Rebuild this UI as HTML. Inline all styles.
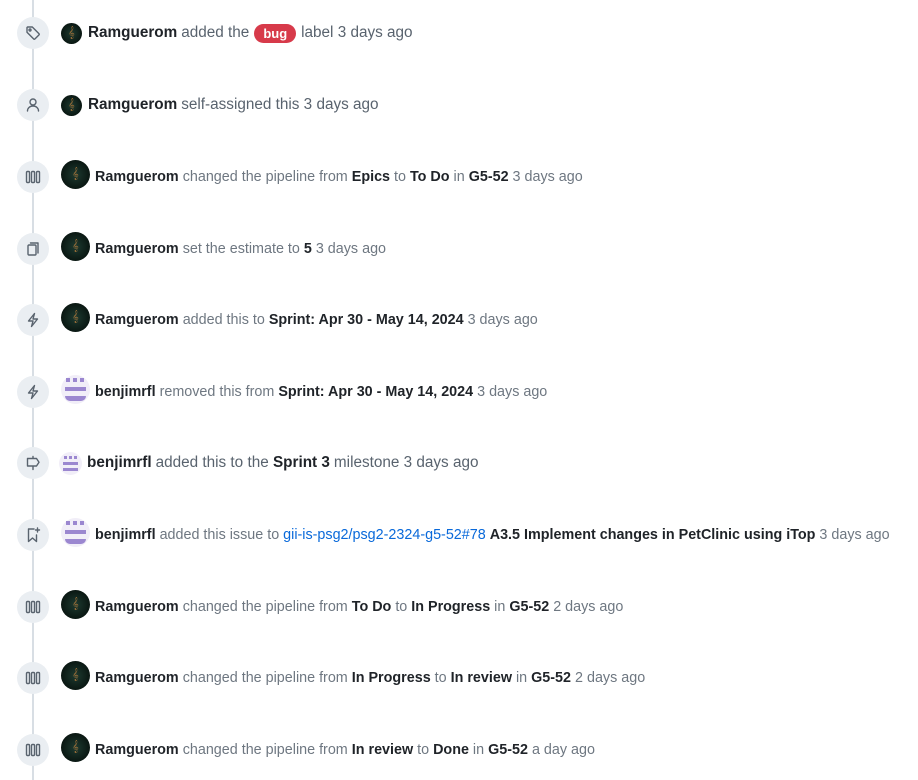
<!DOCTYPE html>
<html><head><meta charset="utf-8"><style>
body{margin:0;width:918px;height:780px;background:#fff;position:relative;overflow:hidden;font-family:"Liberation Sans",sans-serif;}
.line{position:absolute;left:32px;top:0;width:2px;height:780px;background:#d8dee4;}
.ic{position:absolute;left:17px;width:32px;height:32px;border-radius:50%;background:#eaeef2;display:flex;align-items:center;justify-content:center;}
.ic svg{width:16px;height:16px;fill:none;stroke:#59636e;stroke-width:1.4;stroke-linecap:round;stroke-linejoin:round}
.t{position:absolute;white-space:nowrap;display:flex;align-items:center;}
.g{font-size:15.3px;color:#59636e;}
.z{font-size:14.35px;color:#6e7781;}
.z .tx{position:relative;top:3px}
b{color:#1f2328;font-weight:bold;}
.g b{margin-right:4px}
.av{border-radius:50%;background:radial-gradient(circle,#1d3a30 0%,#07120e 80%);display:inline-flex;align-items:center;justify-content:center;color:#a8743a;font-size:11px;margin-right:6px;flex:none}
.bv{border-radius:50%;background:#f1eef8;position:relative;display:inline-block;margin-right:6px;flex:none}
.bv i{position:absolute;background:#9b87d0;}
.lab{background:#d73a4a;color:#fff;font-weight:bold;font-size:13px;border-radius:11px;padding:2px 9px;margin:0 5px;}
a{color:#0969da;text-decoration:none}
</style></head><body>
<div class="line"></div>

<div class="ic" style="top:17px"><svg viewBox="0 0 16 16"><path d="M2 2.5v4.8l6.6 6.6a1 1 0 0 0 1.4 0l3.9-3.9a1 1 0 0 0 0-1.4L7.3 2H2.5z"/><circle cx="5" cy="5" r="1"/></svg></div>
<div class="t g" style="left:61px;top:22px;height:22px"><span class="av" style="width:21px;height:21px">𝄞</span><b>Ramguerom</b>added the<span class="lab">bug</span>label 3 days ago</div>

<div class="ic" style="top:89px"><svg viewBox="0 0 16 16"><circle cx="8" cy="5" r="3"/><path d="M2.5 14c0-3 2.5-5 5.5-5s5.5 2 5.5 5"/></svg></div>
<div class="t g" style="left:61px;top:94px;height:22px"><span class="av" style="width:21px;height:21px">𝄞</span><b>Ramguerom</b>self-assigned this 3 days ago</div>

<div class="ic" style="top:161px"><svg viewBox="0 0 16 16"><rect x="1.5" y="2.5" width="3" height="11" rx="1"/><rect x="6.5" y="2.5" width="3" height="11" rx="1"/><rect x="11.5" y="2.5" width="3" height="11" rx="1"/></svg></div>
<div class="t z" style="left:61px;top:159px;height:30px"><span class="av" style="width:29px;height:29px;margin-right:5px">𝄞</span><span class="tx"><b>Ramguerom</b> changed the pipeline from <b>Epics</b> to <b>To Do</b> in <b>G5-52</b> 3 days ago</span></div>

<div class="ic" style="top:233px"><svg viewBox="0 0 16 16"><rect x="3" y="4" width="8" height="10" rx="1"/><path d="M5.5 2h7.5v10"/></svg></div>
<div class="t z" style="left:61px;top:231px;height:30px"><span class="av" style="width:29px;height:29px;margin-right:5px">𝄞</span><span class="tx"><b>Ramguerom</b> set the estimate to <b>5</b> 3 days ago</span></div>

<div class="ic" style="top:304px"><svg viewBox="0 0 16 16"><path d="M9.5 1.5L3.5 9h4.5l-1.5 5.5 6-7.5H8z"/></svg></div>
<div class="t z" style="left:61px;top:302px;height:30px"><span class="av" style="width:29px;height:29px;margin-right:5px">𝄞</span><span class="tx"><b>Ramguerom</b> added this to <b>Sprint: Apr 30 - May 14, 2024</b> 3 days ago</span></div>

<div class="ic" style="top:376px"><svg viewBox="0 0 16 16"><path d="M9.5 1.5L3.5 9h4.5l-1.5 5.5 6-7.5H8z"/></svg></div>
<div class="t z" style="left:61px;top:374px;height:30px"><span class="bv" style="width:29px;height:29px;margin-right:5px"><i style="left:5px;top:3px;width:4px;height:4px"></i><i style="left:12px;top:3px;width:4px;height:4px"></i><i style="left:19px;top:3px;width:4px;height:4px"></i><i style="left:4px;top:12px;width:21px;height:4px"></i><i style="left:4px;top:21px;width:21px;height:5px;border-radius:0 0 6px 6px"></i></span><span class="tx"><b>benjimrfl</b> removed this from <b>Sprint: Apr 30 - May 14, 2024</b> 3 days ago</span></div>

<div class="ic" style="top:447px"><svg viewBox="0 0 16 16"><path d="M8 1.5v2M8 11v3.5M2.5 3.5h9l2.5 3.75-2.5 3.75h-9z"/></svg></div>
<div class="t g" style="left:59px;top:451px;height:24px"><span class="bv" style="width:23px;height:23px;margin-right:5px"><i style="left:5px;top:4px;width:3px;height:3px"></i><i style="left:10px;top:4px;width:3px;height:3px"></i><i style="left:15px;top:4px;width:3px;height:3px"></i><i style="left:4px;top:10px;width:15px;height:3px"></i><i style="left:4px;top:16px;width:15px;height:3px"></i></span><b>benjimrfl</b>added this to the&nbsp;<b>Sprint 3</b>milestone 3 days ago</div>

<div class="ic" style="top:519px"><svg viewBox="0 0 16 16"><path d="M9 2H3.5v12.5L7.5 11l4 3.5V8"/><path d="M12.5 1v4M10.5 3h4"/></svg></div>
<div class="t z" style="left:61px;top:517px;height:30px"><span class="bv" style="width:29px;height:29px;margin-right:5px"><i style="left:5px;top:3px;width:4px;height:4px"></i><i style="left:12px;top:3px;width:4px;height:4px"></i><i style="left:19px;top:3px;width:4px;height:4px"></i><i style="left:4px;top:12px;width:21px;height:4px"></i><i style="left:4px;top:21px;width:21px;height:5px;border-radius:0 0 6px 6px"></i></span><span class="tx"><b>benjimrfl</b> added this issue to <a>gii-is-psg2/psg2-2324-g5-52#78</a> <b>A3.5 Implement changes in PetClinic using iTop</b> 3 days ago</span></div>

<div class="ic" style="top:591px"><svg viewBox="0 0 16 16"><rect x="1.5" y="2.5" width="3" height="11" rx="1"/><rect x="6.5" y="2.5" width="3" height="11" rx="1"/><rect x="11.5" y="2.5" width="3" height="11" rx="1"/></svg></div>
<div class="t z" style="left:61px;top:589px;height:30px"><span class="av" style="width:29px;height:29px;margin-right:5px">𝄞</span><span class="tx"><b>Ramguerom</b> changed the pipeline from <b>To Do</b> to <b>In Progress</b> in <b>G5-52</b> 2 days ago</span></div>

<div class="ic" style="top:662px"><svg viewBox="0 0 16 16"><rect x="1.5" y="2.5" width="3" height="11" rx="1"/><rect x="6.5" y="2.5" width="3" height="11" rx="1"/><rect x="11.5" y="2.5" width="3" height="11" rx="1"/></svg></div>
<div class="t z" style="left:61px;top:660px;height:30px"><span class="av" style="width:29px;height:29px;margin-right:5px">𝄞</span><span class="tx"><b>Ramguerom</b> changed the pipeline from <b>In Progress</b> to <b>In review</b> in <b>G5-52</b> 2 days ago</span></div>

<div class="ic" style="top:734px"><svg viewBox="0 0 16 16"><rect x="1.5" y="2.5" width="3" height="11" rx="1"/><rect x="6.5" y="2.5" width="3" height="11" rx="1"/><rect x="11.5" y="2.5" width="3" height="11" rx="1"/></svg></div>
<div class="t z" style="left:61px;top:732px;height:30px"><span class="av" style="width:29px;height:29px;margin-right:5px">𝄞</span><span class="tx"><b>Ramguerom</b> changed the pipeline from <b>In review</b> to <b>Done</b> in <b>G5-52</b> a day ago</span></div>
</body></html>
